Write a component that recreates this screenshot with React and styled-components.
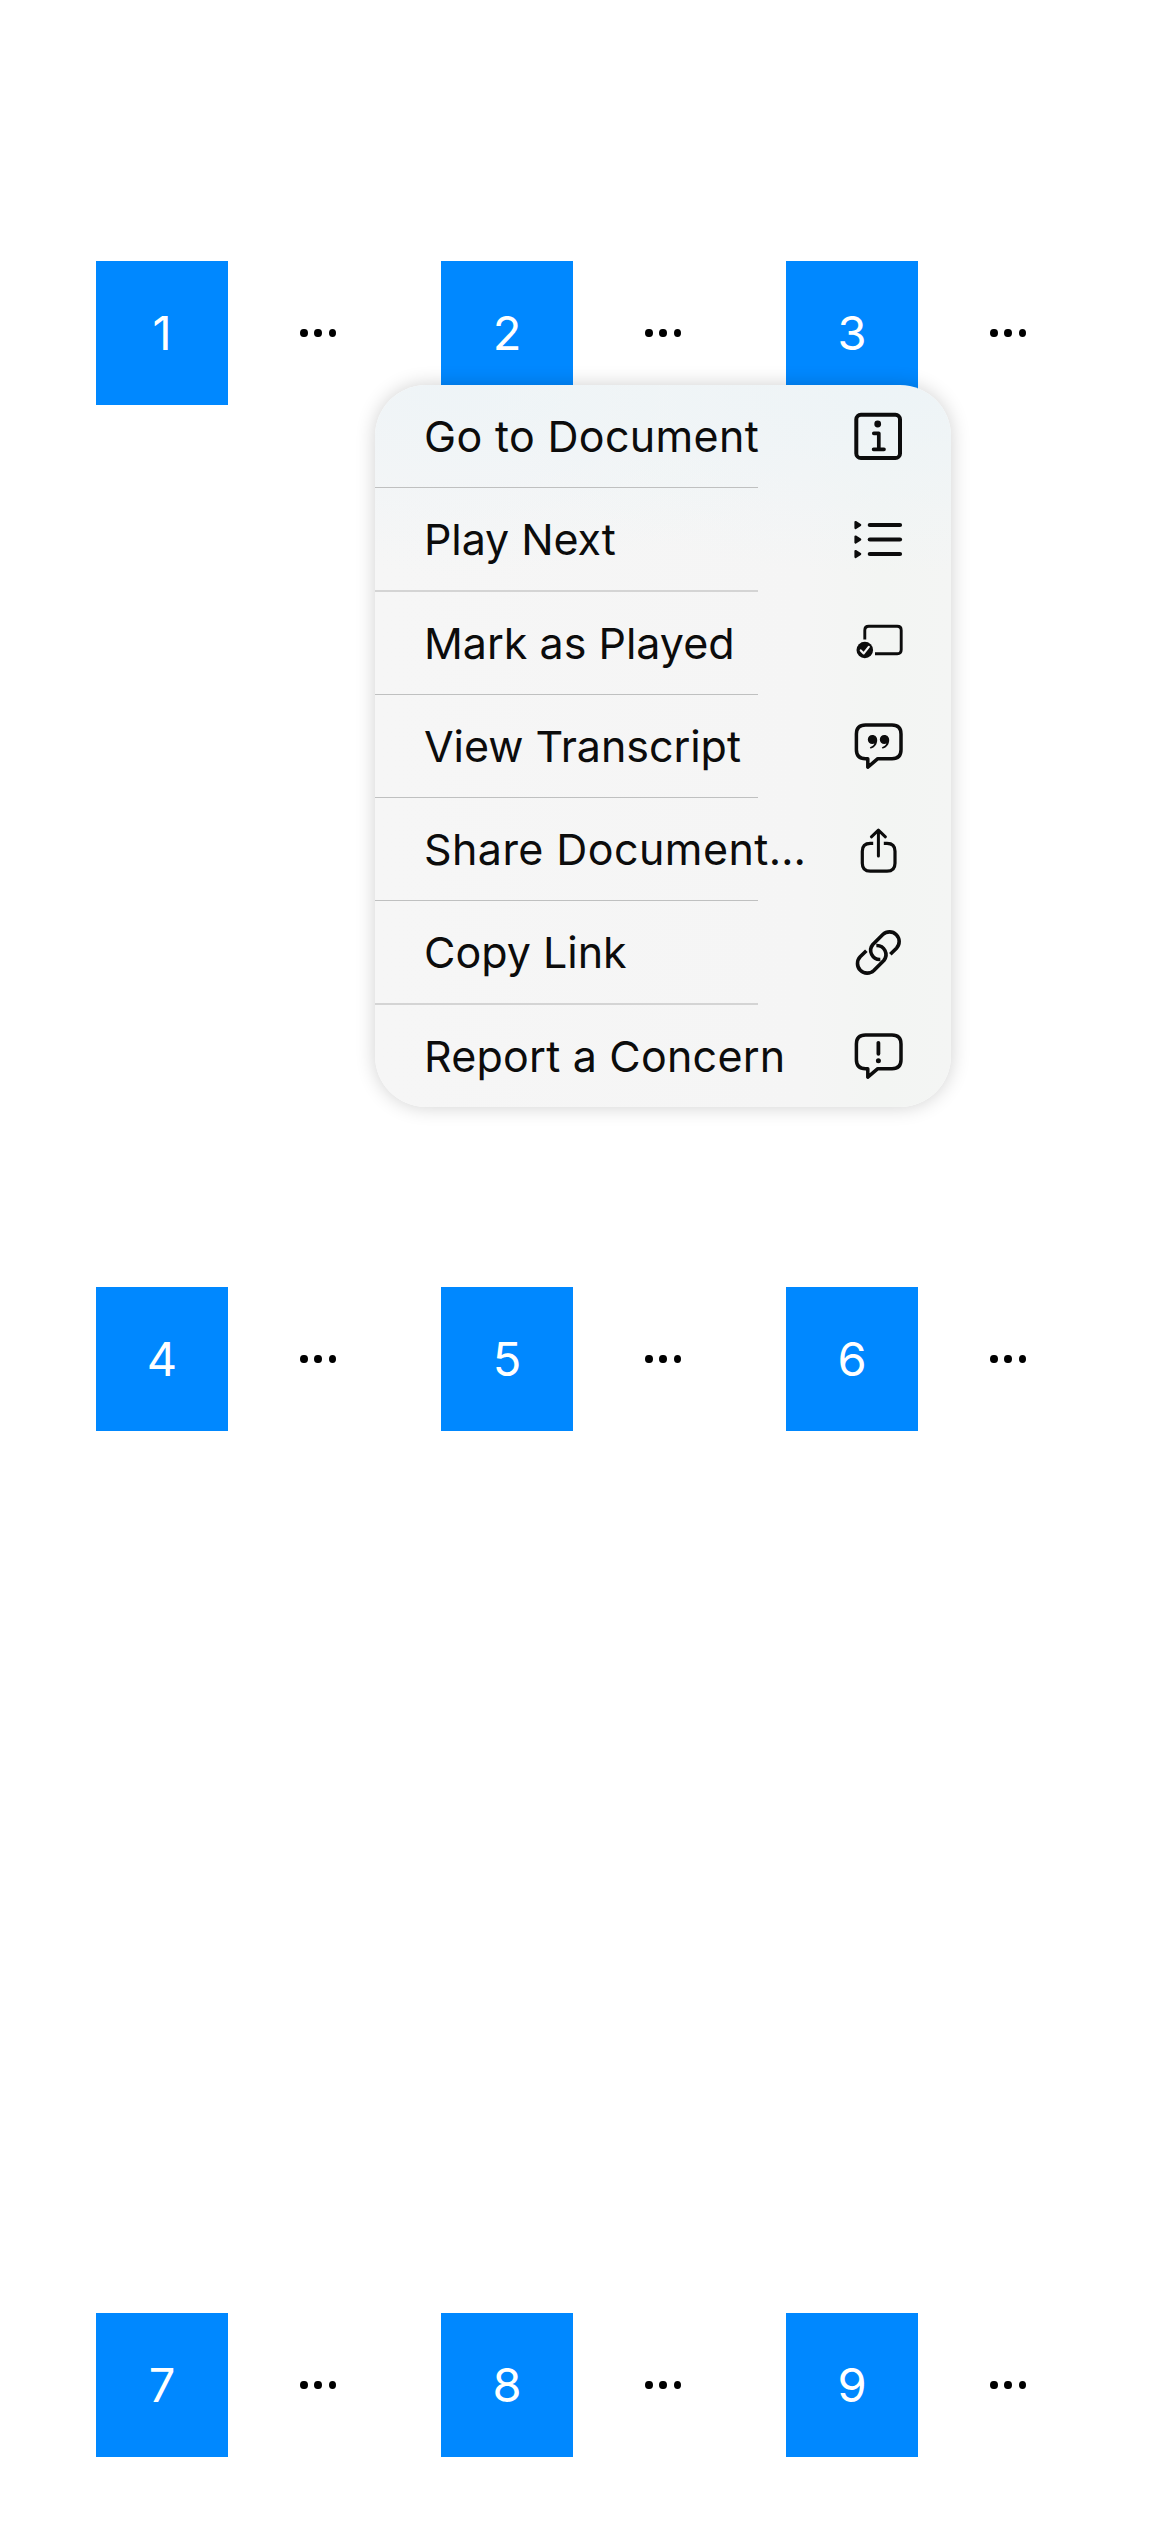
import React from 'react';
import styled, { createGlobalStyle } from 'styled-components';

const GlobalStyle = createGlobalStyle`
  body {
    margin: 0;
    background: #ffffff;
    font-family: Inter, "Liberation Sans", sans-serif;
  }
`;

const Screen = styled.main`
  position: relative;
  box-sizing: border-box;
  width: 1170px;
  height: 2532px;
  padding: 261px 0 0 96px;
  overflow: hidden;
  background: #ffffff;
`;

const TileGrid = styled.div`
  display: grid;
  grid-template-columns: repeat(3, 345px);
  grid-auto-rows: 144px;
  row-gap: 882px;
`;

const Cell = styled.div`
  display: flex;
  align-items: center;
  gap: 72px;
`;

const Tile = styled.div`
  display: flex;
  align-items: center;
  justify-content: center;
  width: 132px;
  height: 144px;
  background: #0088ff;
  color: #ffffff;
  font-size: 47px;
  line-height: 144px;
`;

const MoreButton = styled.button`
  display: flex;
  align-items: center;
  gap: 6.8px;
  height: 60px;
  padding: 0;
  border: 0;
  background: none;
`;

const Dot = styled.span`
  width: 7.5px;
  height: 8.4px;
  border-radius: 50%;
  background: #000000;
`;

const Menu = styled.ul`
  position: absolute;
  left: 375px;
  top: 385px;
  display: flex;
  flex-direction: column;
  width: 576px;
  height: 722px;
  margin: 0;
  padding: 0;
  list-style: none;
  border-radius: 51px;
  background:
    radial-gradient(ellipse 420px 190px at 510px 0, #edf4f7 0%, rgba(237, 244, 247, 0) 100%),
    radial-gradient(ellipse 380px 190px at 90px 0, #eef4f7 0%, rgba(238, 244, 247, 0) 100%),
    linear-gradient(90deg, #f6f6f6 0%, #f5f5f5 75%, #f3f5f3 88%, #f4f5f4 100%);
  box-shadow: 0 0 19px rgba(0, 0, 0, 0.19);
`;

const MenuItem = styled.li`
  display: flex;
  flex-direction: column;
`;

const ItemButton = styled.button`
  display: flex;
  align-items: center;
  justify-content: space-between;
  height: 102px;
  padding: 0 45px 0 49px;
  border: 0;
  background: none;
  color: #0c0c0c;
  font-family: inherit;
`;

const Label = styled.span`
  font-size: 43px;
  line-height: 102px;
  letter-spacing: ${(p) => p.$spacing}px;
  white-space: nowrap;
`;

const Divider = styled.span`
  width: 383px;
  height: ${(p) => p.$thickness}px;
  background: ${(p) => (p.$thickness > 1 ? '#d4d4d4' : '#bfc0c0')};
`;

const Icon = styled.svg`
  flex: none;
  width: 56px;
  height: 60px;
  fill: none;
  stroke: #0c0c0c;
  stroke-linecap: round;
  stroke-linejoin: round;
`;

const INK = '#0c0c0c';

const InfoIcon = () => (
  <Icon viewBox="0 0 56 60">
    <rect x="6.3" y="8.7" width="43.7" height="43.3" rx="4.6" strokeWidth="4" />
    <circle cx="27.7" cy="18" r="3.4" fill={INK} stroke="none" />
    <path d="M23.8 27.3H28.8V43M23.6 43.3H34" strokeWidth="3.7" />
  </Icon>
);

const QueueIcon = () => (
  <Icon viewBox="0 0 56 60">
    {[16, 30.5, 45].map((y) => (
      <g key={y}>
        <path d={`M5.5 ${y - 3}L10.2 ${y}L5.5 ${y + 3}Z`} fill={INK} strokeWidth="2.2" />
        <path d={`M19.8 ${y}H50`} strokeWidth="4.2" />
      </g>
    ))}
  </Icon>
);

const PlayedIcon = () => (
  <Icon viewBox="0 0 56 60">
    <path
      d="M14.8 26.5V17.3Q14.8 13.3 18.8 13.3H47.2Q51.2 13.3 51.2 17.3V36.7Q51.2 40.7 47.2 40.7H25"
      strokeWidth="2.9"
      strokeLinecap="butt"
    />
    <circle cx="14.8" cy="37" r="8.3" fill={INK} stroke="none" />
    <path d="M10.8 37.4L13.7 40.4L18.8 33.8" stroke="#f5f5f5" strokeWidth="2.2" />
  </Icon>
);

const BUBBLE =
  'M15.5 9H42Q51 9 51 18V33.8Q51 42.7 42 42.7H27.8L17.8 51.2V42.7H15.5Q6.4 42.7 6.4 33.8V18Q6.4 9 15.5 9Z';

const TranscriptIcon = () => (
  <Icon viewBox="0 0 56 60">
    <path d={BUBBLE} strokeWidth="3.5" />
    {[0, 12].map((x) => (
      <path
        key={x}
        transform={`translate(${x} 0)`}
        d="M22.3 19C25.4 19 27.2 21.2 27.2 24.1C27.2 28.6 24.6 31.7 21 32.5C19.8 32.7 19.5 31.4 20.5 31C22.6 30.2 23.9 29 24.4 27.6C23.9 27.9 23.2 28.1 22.4 28.1C19.7 28.1 17.8 26.1 17.8 23.6C17.8 20.9 19.8 19 22.3 19Z"
        fill={INK}
        stroke="none"
      />
    ))}
  </Icon>
);

const ShareIcon = () => (
  <Icon viewBox="0 0 56 60">
    <path
      d="M23.2 24.3H20.3Q12.3 24.3 12.3 32.3V44.2Q12.3 52.2 20.3 52.2H37Q45 52.2 45 44.2V32.3Q45 24.3 37 24.3H33.8"
      strokeWidth="3.2"
      strokeLinecap="butt"
    />
    <path d="M28.4 12V37M21.4 17.8L28.4 11.2L35.4 17.8" strokeWidth="3" />
  </Icon>
);

const LinkIcon = () => (
  <Icon viewBox="0 0 56 60">
    <g transform="translate(-30 -12) scale(0.33333)" strokeWidth="10.8" strokeLinecap="butt">
      <path d="M211 133L229.5 114.5A29 29 0 0 0 188.5 73.5L158.5 103.5A27.5 27.5 0 0 0 181 148.5" />
      <path d="M139 122L120.5 140.5A29 29 0 0 0 161.5 181.5L191.5 151.5A27.5 27.5 0 0 0 169 106.5" />
    </g>
  </Icon>
);

const ReportIcon = () => (
  <Icon viewBox="0 0 56 60">
    <path d={BUBBLE} strokeWidth="3.5" />
    <path d="M28.4 16.8V27.8" strokeWidth="3.8" />
    <circle cx="28.4" cy="34.8" r="2.5" fill={INK} stroke="none" />
  </Icon>
);

const MENU_ITEMS = [
  { label: 'Go to Document', spacing: 0.33, icon: InfoIcon, divider: 1 },
  { label: 'Play Next', spacing: -0.1, icon: QueueIcon, divider: 2 },
  { label: 'Mark as Played', spacing: 0, icon: PlayedIcon, divider: 1 },
  { label: 'View Transcript', spacing: -0.05, icon: TranscriptIcon, divider: 1 },
  { label: 'Share Document…', spacing: 0.42, icon: ShareIcon, divider: 1 },
  { label: 'Copy Link', spacing: 0, icon: LinkIcon, divider: 2 },
  { label: 'Report a Concern', spacing: 0.21, icon: ReportIcon, divider: 0 },
];

const TILES = [1, 2, 3, 4, 5, 6, 7, 8, 9];

export default function App() {
  return (
    <>
      <GlobalStyle />
      <Screen>
        <TileGrid>
          {TILES.map((n) => (
            <Cell key={n}>
              <Tile>{n}</Tile>
              <MoreButton aria-label={`More options for ${n}`}>
                <Dot />
                <Dot />
                <Dot />
              </MoreButton>
            </Cell>
          ))}
        </TileGrid>
        <Menu>
          {MENU_ITEMS.map(({ label, spacing, icon: ItemIcon, divider }) => (
            <MenuItem key={label}>
              <ItemButton>
                <Label $spacing={spacing}>{label}</Label>
                <ItemIcon />
              </ItemButton>
              {divider > 0 && <Divider $thickness={divider} />}
            </MenuItem>
          ))}
        </Menu>
      </Screen>
    </>
  );
}
